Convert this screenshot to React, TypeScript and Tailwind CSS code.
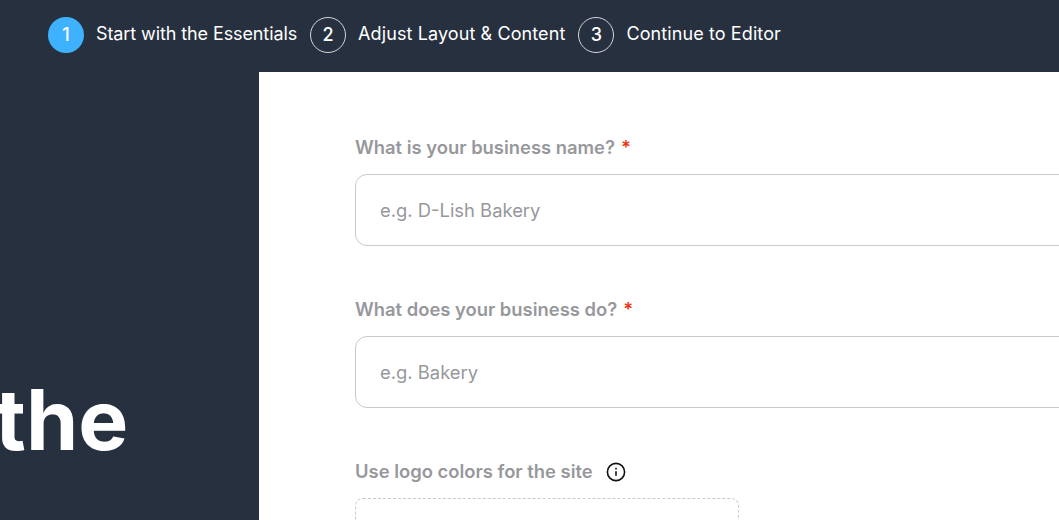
const FONT = "font-['Inter','Liberation_Sans',sans-serif]";

function Step({ num, label, active, tracking }: { num: number; label: string; active?: boolean; tracking: string }) {
  return (
    <div className="flex items-center gap-3">
      <div
        className={
          active
            ? 'flex h-9 w-9 shrink-0 items-center justify-center rounded-full bg-[#3eb2ff] text-lg font-medium text-white'
            : 'flex h-9 w-9 shrink-0 items-center justify-center rounded-full border border-[#d5d7da] text-lg font-medium text-white'
        }
      >
        {num}
      </div>
      <span className={`pb-[2px] text-lg whitespace-nowrap text-white ${tracking}`}>{label}</span>
    </div>
  );
}

function Field({ label, placeholder }: { label: string; placeholder: string }) {
  return (
    <div className="mb-[57px]">
      <label className="mb-5 flex h-[13px] items-center gap-[6px] text-[18.4px] leading-[13px] font-semibold text-[#97989c]">
        {label}
        <span className="text-[#f0330f]">*</span>
      </label>
      <input
        readOnly
        placeholder={placeholder}
        className="h-[72px] w-[900px] rounded-xl border border-[#c9cacc] bg-white px-6 text-[18.4px] outline-none placeholder:text-[#97989c]"
      />
    </div>
  );
}

export default function App() {
  return (
    <div className={`${FONT} flex h-[520px] w-[1059px] flex-col overflow-hidden bg-[#27303f]`}>
      <header className="flex h-[72px] shrink-0 items-center gap-[13px] pb-[2px] pl-12">
        <Step num={1} label="Start with the Essentials" active tracking="tracking-[-0.1px]" />
        <Step num={2} label="Adjust Layout & Content" tracking="tracking-[0.1px]" />
        <Step num={3} label="Continue to Editor" tracking="tracking-[0.1px]" />
      </header>
      <main className="flex flex-1 overflow-hidden">
        <aside className="flex w-[259px] shrink-0 items-start overflow-hidden pt-[288px]">
          <h1 className="-ml-[5px] text-[84px] leading-[120px] font-bold text-white">the</h1>
        </aside>
        <section className="flex-1 overflow-hidden bg-white pt-[69px] pl-24">
          <Field label="What is your business name?" placeholder="e.g. D-Lish Bakery" />
          <Field label="What does your business do?" placeholder="e.g. Bakery" />
          <div className="flex h-[13px] items-center gap-[13px] text-[18.4px] font-semibold text-[#97989c]">
            Use logo colors for the site
            <svg width="20" height="20" viewBox="0 0 20 20" fill="none" stroke="#111" strokeWidth="1.6">
              <circle cx="10" cy="10" r="8.6" />
              <path d="M10 9.2v4.6" />
              <path d="M10 5.8v1.6" />
            </svg>
          </div>
          <div className="mt-5 h-[120px] w-[384px] rounded-lg border border-dashed border-[#c9cacc]" />
        </section>
      </main>
    </div>
  );
}
